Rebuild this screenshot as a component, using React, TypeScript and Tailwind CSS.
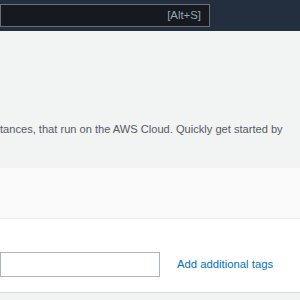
import React from 'react';

export default function App() {
  return (
    <div className="w-[300px] h-[300px] overflow-hidden bg-[#f2f3f3] font-['Liberation_Sans',Arial,sans-serif]">
      {/* Top nav */}
      <div className="h-[31px] bg-[#232f3e] flex items-center">
        <div className="w-[210px] h-[23px] border border-[#687078] bg-[#16191f] flex items-center justify-end pr-[8px]">
          <span className="text-[11.4px] text-[#95a5b3]">[Alt+S]</span>
        </div>
      </div>

      {/* Intro */}
      <div className="h-[137px] flex flex-col justify-end pb-[31px]">
        <p className="text-[11.1px] leading-[16px] text-[#545b64] whitespace-nowrap">
          tances, that run on the AWS Cloud. Quickly get started by
        </p>
      </div>

      {/* Panel header */}
      <div className="h-[51px] bg-[#fafafa] border-b border-[#eaeded]" />

      {/* Name and tags */}
      <div className="h-[74px] bg-white border-b border-[#d5dbdb] flex items-start pt-[33px]">
        <input
          type="text"
          className="w-[160px] h-[25px] border border-[#aab7b8] bg-white outline-none"
        />
        <a href="#" className="ml-[17px] mt-[4px] text-[11.3px] leading-[16px] text-[#0073bb] whitespace-nowrap">
          Add additional tags
        </a>
      </div>
    </div>
  );
}
